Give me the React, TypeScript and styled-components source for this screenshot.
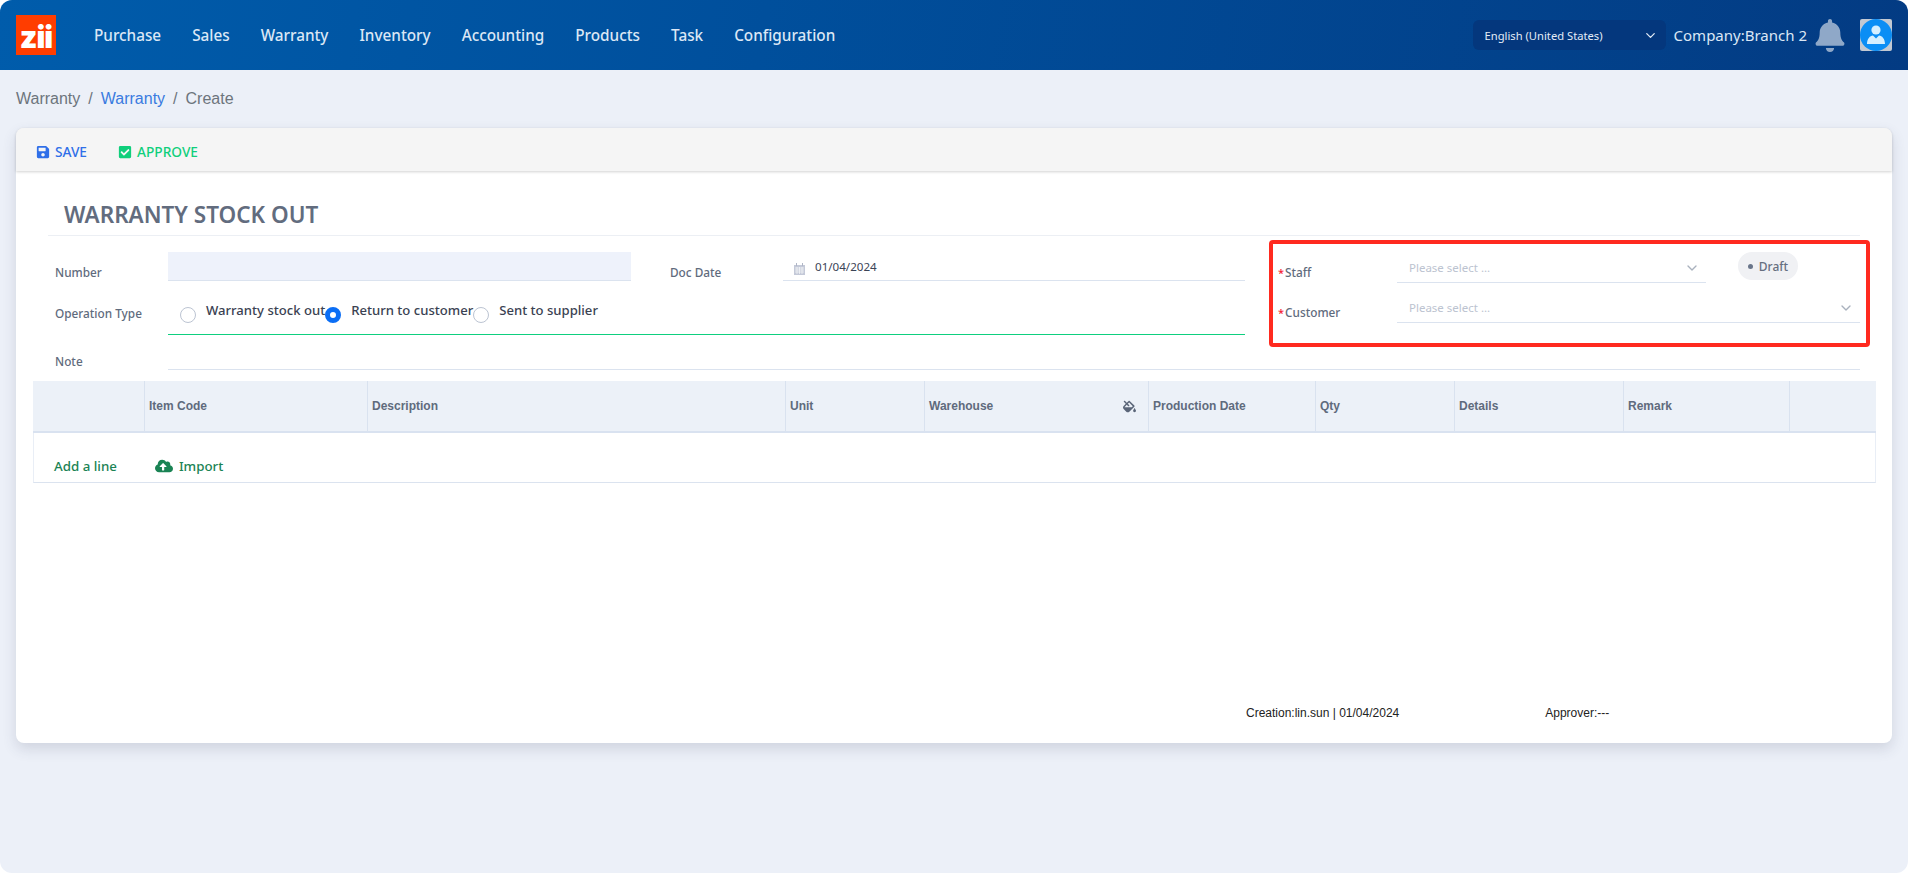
import React from "react";
import styled, { createGlobalStyle } from "styled-components";
import { FaBell, FaCloudUploadAlt, FaFillDrip, FaSave, FaCheckSquare } from "react-icons/fa";
import { ChevronDown } from "lucide-react";

const Global = createGlobalStyle`
  html, body { margin: 0; padding: 0; background: #fff; }
  * { box-sizing: border-box; }
  body { font-family: "Noto Sans", "Liberation Sans", sans-serif; }
`;

const Page = styled.div`
  position: relative;
  width: 1908px;
  height: 873px;
  background: #ecf0f8;
  border-radius: 12px;
  overflow: hidden;
`;

const Header = styled.header`
  height: 70px;
  padding: 0 16px;
  display: flex;
  align-items: center;
  background: linear-gradient(100deg, #005cab 0%, #004f9c 40%, #033b83 100%);
`;

const Logo = styled.div`
  width: 40px;
  height: 40px;
  padding-top: 3px;
  background: #ff3d00;
  color: #fff;
  display: flex;
  align-items: center;
  justify-content: center;
  font: 900 30px/36px "Inter", "Liberation Sans", sans-serif;
  letter-spacing: -1px;
`;

const Nav = styled.nav`
  display: flex;
  gap: 31px;
  margin-left: 38px;
  flex: 1;
`;

const NavItem = styled.span`
  color: #dbe7f5;
  font-size: 15.3px;
  font-weight: 500;
`;

const LangSelect = styled.div`
  width: 193px;
  height: 30px;
  padding: 0 8px 0 12px;
  border-radius: 6px;
  background: #04377d;
  color: #e3ecf7;
  font-size: 11.2px;
  display: flex;
  align-items: center;
  justify-content: space-between;
`;

const Company = styled.span`
  margin-left: 8px;
  color: #dbe7f5;
  font-size: 15px;
  white-space: nowrap;
`;

const BellIcon = styled(FaBell)`
  margin-left: 8px;
  width: 30px;
  height: 33px;
  color: #8fa8c8;
`;

const Avatar = styled.svg`
  margin-left: 15px;
  width: 32px;
  height: 32px;
  flex: none;
`;

const Breadcrumb = styled.div`
  height: 58px;
  padding-left: 16px;
  display: flex;
  align-items: center;
  gap: 8px;
  font: 16px "Liberation Sans", Arial, sans-serif;
  color: #6c757d;
`;

const Crumb = styled.span<{ $link?: boolean }>`
  color: ${(p) => (p.$link ? "#3a7be0" : "#6c757d")};
`;

const Card = styled.main`
  height: 615px;
  margin: 0 16px;
  background: #fff;
  border-radius: 8px;
  box-shadow: 0 6px 14px rgba(60, 70, 100, 0.16);
  position: relative;
`;

const Toolbar = styled.div`
  height: 43px;
  padding: 4px 0 0 20px;
  display: flex;
  align-items: center;
  gap: 31px;
  background: #f5f5f5;
  border-radius: 8px 8px 0 0;
  box-shadow: 0 1px 3px rgba(0, 0, 0, 0.18);
`;

const ToolButton = styled.span<{ $color: string }>`
  display: flex;
  align-items: center;
  gap: 5px;
  color: ${(p) => p.$color};
  font-size: 13.7px;
  font-weight: 500;
`;

const Title = styled.h1`
  margin: 0 32px 0 32px;
  height: 65px;
  padding: 29px 0 0 16px;
  border-bottom: 1px solid #eceff4;
  color: #626c7e;
  font-size: 22.5px;
  line-height: 30px;
  font-weight: 600;
`;

const Form = styled.div`
  padding: 16px 32px 0 39px;
`;

const TopRow = styled.div`
  display: flex;
`;

const LeftBlock = styled.div`
  width: 1190px;
  flex: none;
`;

const RightBlock = styled.div`
  margin-left: 33px;
  flex: 1;
`;

const FieldRow = styled.div<{ $h: number }>`
  display: flex;
  height: ${(p) => p.$h}px;
`;

const Label = styled.label<{ $w: number; $top: number }>`
  width: ${(p) => p.$w}px;
  padding-top: ${(p) => p.$top}px;
  flex: none;
  color: #5f6b7d;
  font-size: 11.8px;
  line-height: 17px;
  font-weight: 500;
`;

const Star = styled.span`
  color: #f5222d;
  font-size: 11px;
  margin-right: 1px;
`;

const ReadonlyInput = styled.div`
  width: 463px;
  height: 29px;
  background: #eef2fb;
  border-bottom: 1px solid #dbe3ef;
`;

const DateField = styled.div`
  width: 462px;
  height: 29px;
  padding: 0 0 5px 11px;
  display: flex;
  align-items: flex-end;
  gap: 10px;
  color: #3b4456;
  font-size: 11.6px;
  line-height: 17px;
  border-bottom: 1px solid #dbe3ef;
`;

const DateLabelSpace = styled(Label)`
  margin-left: 39px;
`;

const CalIcon = styled.svg`
  width: 11px;
  height: 12px;
  flex: none;
`;

const RadioGroup = styled.div`
  flex: 1;
  height: 54px;
  padding-left: 12px;
  display: flex;
  border-bottom: 1px solid #0ecf7f;
`;

const RadioItem = styled.span`
  display: flex;
  align-items: flex-start;
  padding-top: 19px;
`;

const RadioDot = styled.span<{ $on?: boolean }>`
  width: 16px;
  height: 16px;
  margin-top: 7px;
  border-radius: 50%;
  flex: none;
  background: #fff;
  border: ${(p) => (p.$on ? "5px solid #0b6ef5" : "1px solid #bcc4d2")};
`;

const RadioText = styled.span`
  margin-left: 10px;
  color: #3a4252;
  font-size: 13.1px;
  line-height: 20px;
  font-weight: 500;
  white-space: nowrap;
`;

const SelectBox = styled.div<{ $w?: number }>`
  ${(p) => (p.$w ? `width: ${p.$w}px;` : "flex: 1;")}
  height: 31px;
  padding: 0 6px 6px 12px;
  display: flex;
  align-items: flex-end;
  justify-content: space-between;
  color: #bcc3d0;
  font-size: 11.5px;
  line-height: 17px;
  border-bottom: 1px solid #dbe3ef;
`;

const Chevron = styled(ChevronDown)`
  color: #a9b1bd;
`;

const Pill = styled.span`
  width: 60px;
  height: 28px;
  margin-left: 32px;
  border-radius: 14px;
  background: #f0f1f4;
  color: #666f80;
  font-size: 12px;
  font-weight: 500;
  display: flex;
  align-items: center;
  justify-content: center;
  gap: 6px;
`;

const PillDot = styled.span`
  width: 5px;
  height: 5px;
  border-radius: 50%;
  background: #69758a;
`;

const NoteRow = styled.div`
  display: flex;
  height: 35px;
`;

const NoteInput = styled.div`
  flex: 1;
  border-bottom: 1px solid #dbe3ef;
`;

const Table = styled.section`
  margin: 11px 16px 0 17px;
  height: 102px;
  border: 1px solid #e9eef6;
  border-top: none;
  border-bottom: 1px solid #dbe3ef;
`;

const TableHead = styled.div`
  height: 52px;
  background: #ecf1f8;
  border-bottom: 2px solid #d9e2f0;
  display: flex;
  margin: 0 -1px;
`;

const HeadCell = styled.div<{ $w: number }>`
  width: ${(p) => p.$w}px;
  padding-left: 4px;
  flex: none;
  display: flex;
  align-items: center;
  justify-content: space-between;
  border-right: 1px solid #d9e2ef;
  color: #5f6b7d;
  font: 700 12px "Liberation Sans", Arial, sans-serif;
`;

const LastCell = styled.div`
  flex: 1;
`;

const Bucket = styled(FaFillDrip)`
  width: 13px;
  height: 13px;
  margin-right: 12px;
  color: #5a6578;
`;

const TableActions = styled.div`
  height: 49px;
  padding: 16px 0 0 20px;
  display: flex;
  align-items: center;
  color: #1a8354;
  font-size: 13.3px;
  font-weight: 500;
`;

const ImportLink = styled.span`
  display: flex;
  align-items: center;
  gap: 6px;
  margin-left: 38px;
`;

const Footer = styled.div`
  position: absolute;
  left: 0;
  right: 0;
  top: 578px;
  display: flex;
  padding-left: 1230px;
  color: #222;
  font: 12px "Liberation Sans", Arial, sans-serif;
`;

const Approver = styled.span`
  margin-left: 146px;
`;

const Annotation = styled.div`
  position: absolute;
  left: 1269px;
  top: 240px;
  width: 601px;
  height: 107px;
  border: 4px solid #ff2a1f;
  border-radius: 4px;
  pointer-events: none;
`;

const columns: [string, number][] = [
  ["", 112],
  ["Item Code", 223],
  ["Description", 418],
  ["Unit", 139],
  ["Warehouse", 224],
  ["Production Date", 167],
  ["Qty", 139],
  ["Details", 169],
  ["Remark", 166],
];

const navItems = ["Purchase", "Sales", "Warranty", "Inventory", "Accounting", "Products", "Task", "Configuration"];

export default function App() {
  return (
    <Page>
      <Global />
      <Header>
        <Logo>zii</Logo>
        <Nav>
          {navItems.map((n) => (
            <NavItem key={n}>{n}</NavItem>
          ))}
        </Nav>
        <LangSelect>
          English (United States)
          <ChevronDown size={15} />
        </LangSelect>
        <Company>Company:Branch 2</Company>
        <BellIcon />
        <Avatar viewBox="0 0 32 32">
          <rect width="32" height="32" rx="2" fill="#c3c9d2" />
          <circle cx="16" cy="16" r="16" fill="#0b8ef5" />
          <circle cx="16" cy="11" r="4.6" fill="#d5efff" />
          <path d="M7 25c0-5 3-8.500 6-8.500l3 3 3-3c3 0 6 3.500 6 8.500z" fill="#d5efff" />
        </Avatar>
      </Header>
      <Breadcrumb>
        <Crumb>Warranty</Crumb>
        <span>/</span>
        <Crumb $link>Warranty</Crumb>
        <span>/</span>
        <Crumb>Create</Crumb>
      </Breadcrumb>
      <Card>
        <Toolbar>
          <ToolButton $color="#2f6fe8">
            <FaSave size={14} />
            SAVE
          </ToolButton>
          <ToolButton $color="#10cf7c">
            <FaCheckSquare size={14} />
            APPROVE
          </ToolButton>
        </Toolbar>
        <Title>WARRANTY STOCK OUT</Title>
        <Form>
          <TopRow>
            <LeftBlock>
              <FieldRow $h={29}>
                <Label $w={113} $top={12}>Number</Label>
                <ReadonlyInput />
                <DateLabelSpace $w={113} $top={12}>Doc Date</DateLabelSpace>
                <DateField>
                  <CalIcon viewBox="0 0 11 12">
                    <path d="M0 2h11v10H0z" fill="#c4c9d8" />
                    <path d="M2 0h1v3H2zM8 0h1v3H8z" fill="#b0b6c6" />
                    <path d="M1 5h9M1 7h9M1 9h9M3 4v7M5.500 4v7M8 4v7" stroke="#fff" strokeWidth=".6" />
                  </CalIcon>
                  01/04/2024
                </DateField>
              </FieldRow>
              <FieldRow $h={54}>
                <Label $w={113} $top={24}>Operation Type</Label>
                <RadioGroup>
                  <RadioItem>
                    <RadioDot />
                    <RadioText>Warranty stock out</RadioText>
                  </RadioItem>
                  <RadioItem>
                    <RadioDot $on />
                    <RadioText>Return to customer</RadioText>
                  </RadioItem>
                  <RadioItem>
                    <RadioDot />
                    <RadioText>Sent to supplier</RadioText>
                  </RadioItem>
                </RadioGroup>
              </FieldRow>
            </LeftBlock>
            <RightBlock>
              <FieldRow $h={40}>
                <Label $w={119} $top={12}><Star>*</Star>Staff</Label>
                <SelectBox $w={309}>
                  Please select ...
                  <Chevron size={16} />
                </SelectBox>
                <Pill><PillDot />Draft</Pill>
              </FieldRow>
              <FieldRow $h={40}>
                <Label $w={119} $top={12}><Star>*</Star>Customer</Label>
                <SelectBox>
                  Please select ...
                  <Chevron size={16} />
                </SelectBox>
              </FieldRow>
            </RightBlock>
          </TopRow>
          <NoteRow>
            <Label $w={113} $top={18}>Note</Label>
            <NoteInput />
          </NoteRow>
        </Form>
        <Table>
          <TableHead>
            {columns.map(([c, w]) => (
              <HeadCell key={c || "blank"} $w={w}>
                {c}
                {c === "Warehouse" && <Bucket />}
              </HeadCell>
            ))}
            <LastCell />
          </TableHead>
          <TableActions>
            Add a line
            <ImportLink>
              <FaCloudUploadAlt size={18} />
              Import
            </ImportLink>
          </TableActions>
        </Table>
        <Footer>
          <span>Creation:lin.sun | 01/04/2024</span>
          <Approver>Approver:---</Approver>
        </Footer>
      </Card>
      <Annotation />
    </Page>
  );
}
